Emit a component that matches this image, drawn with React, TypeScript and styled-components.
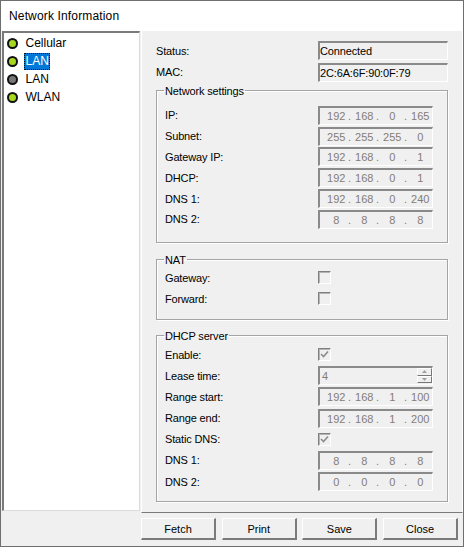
import React from "react";
import styled, { createGlobalStyle } from "styled-components";

const Global = createGlobalStyle`
  html, body {
    margin: 0;
    padding: 0;
    background: #f0f0f0;
  }
`;

const Window = styled.div`
  width: 464px;
  height: 547px;
  box-sizing: border-box;
  border: 1px solid #6f6f6f;
  display: flex;
  flex-direction: column;
  background: #f0f0f0;
  font-family: "Liberation Sans", Arial, sans-serif;
  font-size: 11px;
  letter-spacing: -0.15px;
  color: #000;
  overflow: hidden;
`;

const TitleBar = styled.div`
  height: 30px;
  flex: none;
  background: #fff;
  display: flex;
  align-items: center;
  padding-left: 8px;
  font-size: 12px;
  letter-spacing: 0.15px;
`;

const Main = styled.div`
  display: flex;
  height: 482px;
  flex: none;
`;

const Sidebar = styled.div`
  width: 138px;
  height: 480px;
  flex: none;
  margin-left: 1px;
  box-sizing: border-box;
  background: #fff;
  border-top: 2px solid #7a7a7a;
  border-left: 2px solid #7a7a7a;
  border-right: 1px solid #dcdcdc;
  border-bottom: 1px solid #dcdcdc;
  padding-top: 1px;
  font-size: 12px;
  letter-spacing: 0;
`;

const TreeRow = styled.div`
  display: flex;
  align-items: center;
  height: 18px;
  padding-left: 3px;
`;

const Led = styled.span<{ $on: boolean }>`
  width: 7px;
  height: 7px;
  border-radius: 50%;
  border: 2px solid #111;
  background: ${(p) => (p.$on ? "#a6d81e" : "#777")};
  margin-right: 6px;
  flex: none;
`;

const TreeLabel = styled.span<{ $selected?: boolean }>`
  padding: 1px 1.5px;
  line-height: 15px;
  color: ${(p) => (p.$selected ? "#fff" : "#000")};
  background: ${(p) => (p.$selected ? "#0078d7" : "transparent")};
  outline: ${(p) => (p.$selected ? "1px dotted #111" : "none")};
  outline-offset: -1px;
`;

const Panel = styled.div`
  flex: 1;
  margin-left: 1px;
  box-sizing: border-box;
  border-left: 1px solid #fff;
  border-right: 1px solid #fff;
  border-bottom: 1px solid #7a7a7a;
  padding: 9px 14px 10px 14px;
  display: flex;
  flex-direction: column;
`;

const Row = styled.div<{ $h?: number }>`
  display: flex;
  align-items: center;
  height: ${(p) => p.$h ?? 21}px;
`;

const Label = styled.span<{ $wide?: boolean }>`
  width: ${(p) => (p.$wide ? "162px" : "153px")};
  flex: none;
`;

const Sunken = styled.div`
  box-sizing: border-box;
  height: 19px;
  border-top: 2px solid #8a8a8a;
  border-left: 2px solid #8a8a8a;
  border-right: 1px solid #fff;
  border-bottom: 1px solid #fff;
  background: #f0f0f0;
`;

const StatusField = styled(Sunken)`
  width: 130px;
  line-height: 16px;
`;

const IpField = styled(Sunken)`
  width: 115px;
  display: grid;
  grid-template-columns: repeat(4, 28px);
  color: #857d75;
  line-height: 16px;
  letter-spacing: 0;
`;

const Octet = styled.span`
  position: relative;
  text-align: center;
  padding-left: 4.5px;

  &:not(:last-child)::after {
    content: ".";
    position: absolute;
    right: -3px;
  }
`;

const Group = styled.fieldset<{ $h: number; $top: number; $inner: number }>`
  box-sizing: border-box;
  height: ${(p) => p.$h}px;
  margin: ${(p) => p.$top}px 0 0 0;
  padding: ${(p) => p.$inner}px 14px 0 8px;
  border: 1px solid #a4a4a4;
  box-shadow: 1px 1px 0 #fff, inset 1px 1px 0 #fff;
  min-width: 0;
`;

const Legend = styled.legend`
  padding: 1px 1px 0;
  margin-left: -1px;
  line-height: 14px;
`;

const Check = styled.span`
  box-sizing: border-box;
  width: 13px;
  height: 13px;
  border-top: 1px solid #808080;
  border-left: 1px solid #808080;
  border-right: 1px solid #fff;
  border-bottom: 1px solid #fff;
  box-shadow: inset 1px 1px 0 #b4b4b4;
  background: #f0f0f0;
  display: flex;
  align-items: center;
  justify-content: center;
`;

const Spin = styled(Sunken)`
  width: 115px;
  display: flex;
  justify-content: space-between;
  color: #857d75;
  line-height: 16px;
  padding-left: 2px;
`;

const SpinArrows = styled.div`
  width: 15px;
  display: flex;
  flex-direction: column;
  justify-content: space-between;
  padding: 0 0 1px;
`;

const SpinPart = styled.div`
  box-sizing: border-box;
  height: 8px;
  border-top: 1px solid #fff;
  border-left: 1px solid #fff;
  border-right: 1px solid #777;
  border-bottom: 1px solid #777;
  display: flex;
  align-items: center;
  justify-content: center;
`;

const Footer = styled.div`
  flex: 1;
  display: flex;
  gap: 5.7px;
  padding: 5px 4px 0 140px;
  align-items: flex-start;
`;

const FootButton = styled.button`
  width: 75px;
  height: 22px;
  box-sizing: border-box;
  padding: 0;
  border-top: 1px solid #fff;
  border-left: 1px solid #fff;
  border-right: 2px solid #7a7a7a;
  border-bottom: 2px solid #7a7a7a;
  background: #f0f0f0;
  font: inherit;
  letter-spacing: 0;
  color: #000;
`;

const Ip = ({ v }: { v: string }) => (
  <IpField>
    {v.split(".").map((o, i) => (
      <Octet key={i}>{o}</Octet>
    ))}
  </IpField>
);

const Tick = () => (
  <svg width="9" height="9" viewBox="0 0 9 9">
    <path d="M1 4 L3.5 6.5 L8 1.5" fill="none" stroke="#8c8c8c" strokeWidth="1.6" />
  </svg>
);

const Caret = ({ up }: { up?: boolean }) => (
  <svg width="5" height="3" viewBox="0 0 5 3">
    <path d={up ? "M2.5 0 L5 3 L0 3 Z" : "M0 0 L5 0 L2.5 3 Z"} fill="#a0a0a0" />
  </svg>
);

const tree = [
  { name: "Cellular", on: true },
  { name: "LAN", on: true, selected: true },
  { name: "LAN", on: false },
  { name: "WLAN", on: true },
];

const network = [
  ["IP:", "192.168.0.165"],
  ["Subnet:", "255.255.255.0"],
  ["Gateway IP:", "192.168.0.1"],
  ["DHCP:", "192.168.0.1"],
  ["DNS 1:", "192.168.0.240"],
  ["DNS 2:", "8.8.8.8"],
];

export default function App() {
  return (
    <Window>
      <Global />
      <TitleBar>Network Information</TitleBar>
      <Main>
        <Sidebar>
          {tree.map((t, i) => (
            <TreeRow key={i}>
              <Led $on={t.on} />
              <TreeLabel $selected={t.selected}>{t.name}</TreeLabel>
            </TreeRow>
          ))}
        </Sidebar>
        <Panel>
          <Row $h={21.5}>
            <Label $wide>Status:</Label>
            <StatusField>Connected</StatusField>
          </Row>
          <Row $h={21.5}>
            <Label $wide>MAC:</Label>
            <StatusField>2C:6A:6F:90:0F:79</StatusField>
          </Row>
          <Group $h={160} $top={0} $inner={7}>
            <Legend>Network settings</Legend>
            {network.map(([l, v]) => (
              <Row key={l} $h={20.8}>
                <Label>{l}</Label>
                <Ip v={v} />
              </Row>
            ))}
          </Group>
          <Group $h={68} $top={9} $inner={0}>
            <Legend>NAT</Legend>
            <Row>
              <Label>Gateway:</Label>
              <Check />
            </Row>
            <Row>
              <Label>Forward:</Label>
              <Check />
            </Row>
          </Group>
          <Group $h={174} $top={8} $inner={1}>
            <Legend>DHCP server</Legend>
            <Row $h={21.17}>
              <Label>Enable:</Label>
              <Check>
                <Tick />
              </Check>
            </Row>
            <Row $h={21.17}>
              <Label>Lease time:</Label>
              <Spin>
                4
                <SpinArrows>
                  <SpinPart>
                    <Caret up />
                  </SpinPart>
                  <SpinPart>
                    <Caret />
                  </SpinPart>
                </SpinArrows>
              </Spin>
            </Row>
            <Row $h={21.17}>
              <Label>Range start:</Label>
              <Ip v="192.168.1.100" />
            </Row>
            <Row $h={21.17}>
              <Label>Range end:</Label>
              <Ip v="192.168.1.200" />
            </Row>
            <Row $h={21.17}>
              <Label>Static DNS:</Label>
              <Check>
                <Tick />
              </Check>
            </Row>
            <Row $h={21.17}>
              <Label>DNS 1:</Label>
              <Ip v="8.8.8.8" />
            </Row>
            <Row $h={21.17}>
              <Label>DNS 2:</Label>
              <Ip v="0.0.0.0" />
            </Row>
          </Group>
        </Panel>
      </Main>
      <Footer>
        <FootButton>Fetch</FootButton>
        <FootButton>Print</FootButton>
        <FootButton>Save</FootButton>
        <FootButton>Close</FootButton>
      </Footer>
    </Window>
  );
}
